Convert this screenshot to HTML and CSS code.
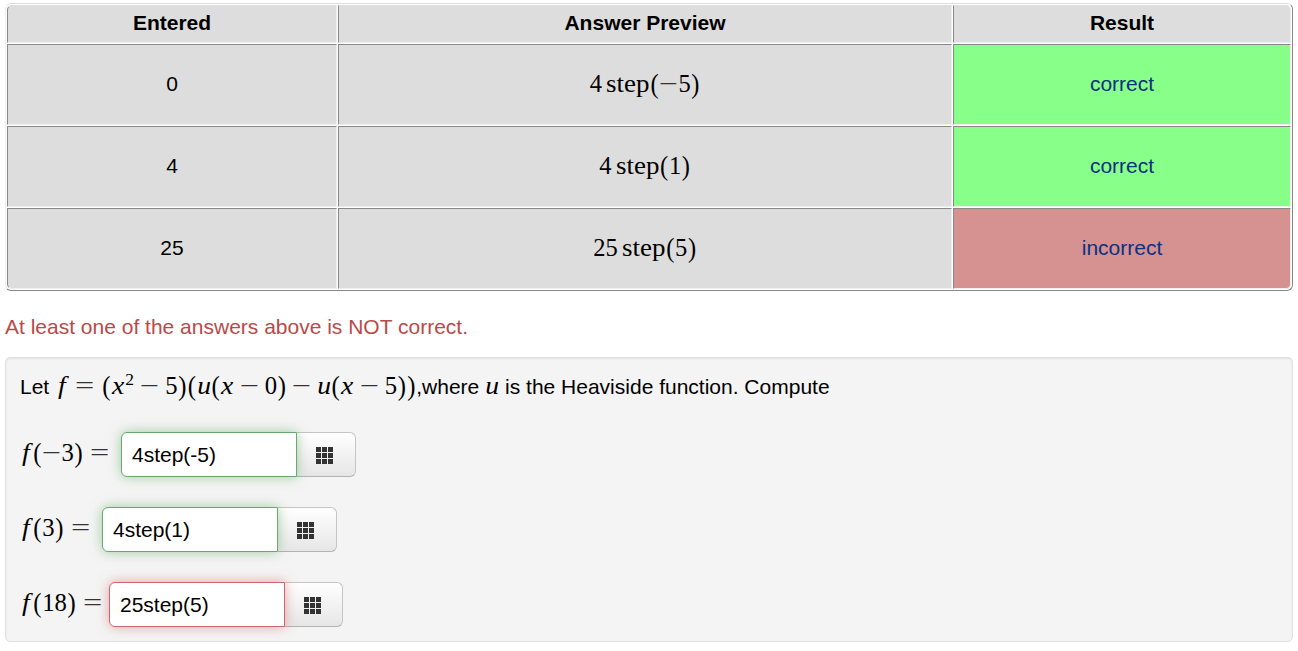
FILE: index.html
```html
<!DOCTYPE html>
<html lang="en">
<head>
<meta charset="utf-8">
<title>Heaviside function</title>
<link rel="stylesheet" href="styles.css">
</head>
<body>
<svg class="defs" width="0" height="0"><symbol id="grid" viewBox="0 0 17 17"><path fill="#333" d="M0 0h5v5H0zM6 0h5v5H6zM12 0h5v5h-5zM0 6h5v5H0zM6 6h5v5H6zM12 6h5v5h-5zM0 12h5v5H0zM6 12h5v5H6zM12 12h5v5h-5z"/></symbol></svg>
<table class="results">
<colgroup><col class="c1"><col class="c2"><col class="c3"></colgroup>
<tr><th>Entered</th><th>Answer Preview</th><th>Result</th></tr>
<tr><td>0</td><td><span class="math">4<span class="step">step</span><b>(</b><i class="minus">−</i>5<b>)</b></span></td><td class="good">correct</td></tr>
<tr><td>4</td><td><span class="math">4<span class="step">step</span><b>(</b>1<b>)</b></span></td><td class="good">correct</td></tr>
<tr><td>25</td><td><span class="math">25<span class="step">step</span><b>(</b>5<b>)</b></span></td><td class="bad">incorrect</td></tr>
</table>
<p class="message">At least one of the answers above is NOT correct.</p>
<main class="problem">
<p class="prompt">Let <span class="math"><em class="f">f</em><i class="rel">=</i><b>(</b><em>x</em><sup>2</sup><i class="bin">−</i>5<b>)</b><b>(</b><em>u</em><b>(</b><em>x</em><i class="bin">−</i>0<b>)</b><i class="bin">−</i><em>u</em><b>(</b><em>x</em><i class="bin">−</i>5<b>)</b><b>)</b></span>,where <span class="math"><em>u</em></span> is the Heaviside function. Compute</p>
<div class="row"><span class="math label l1"><em class="f">f</em><b>(</b><i class="minus">−</i>3<b>)</b><i class="rel">=</i></span><input class="ok" value="4step(-5)"><button><svg width="17" height="17"><use href="#grid"/></svg></button></div>
<div class="row"><span class="math label l2"><em class="f">f</em><b>(</b>3<b>)</b><i class="rel">=</i></span><input class="ok" value="4step(1)"><button><svg width="17" height="17"><use href="#grid"/></svg></button></div>
<div class="row"><span class="math label l3"><em class="f">f</em><b>(</b>18<b>)</b><i class="rel">=</i></span><input class="error" value="25step(5)"><button><svg width="17" height="17"><use href="#grid"/></svg></button></div>
</main>
</body>
</html>
```
FILE: styles.css
```css
* { box-sizing: border-box; }
body { margin: 0; padding: 3px 5px 0; background: #fff; color: #000; font: 21px/30px "Liberation Sans", Arial, sans-serif; overflow: hidden; }
.defs { display: block; height: 0; }
.results { width: 1288px; height: 288px; table-layout: fixed; border-collapse: separate; border-spacing: 1px; border: 1px solid #888; border-top-color: #ddd; border-left-color: #eee; border-radius: 6px; }
.c1 { width: 330px; }
.c2 { width: 614px; }
.c3 { width: 338px; }
th, td { padding: 0; text-align: center; vertical-align: middle; background: #ddd; border: 1px solid #eee; border-top-color: #888; border-left-color: #888; }
th { height: 38px; padding-bottom: 2px; border-top-color: #ddd; }
td { height: 81px; padding-bottom: 1px; }
th:first-child { border-top-left-radius: 5px; }
th:last-child { border-top-right-radius: 5px; }
tr:last-child td:first-child { border-bottom-left-radius: 5px; }
tr:last-child td:last-child { border-bottom-right-radius: 5px; }
.good, .bad { color: #0a3181; }
.good { background: #8f8; }
.bad { background: #d69191; }
.message { margin: 21px 0 15px; color: #b94a48; }

.math { font-family: "Liberation Serif", serif; font-size: 24.5px; line-height: 30px; white-space: nowrap; }
.math b, .math em, .math i { display: inline-block; text-align: center; }
.math b { width: .389em; font-weight: 400; transform: scaleY(1.12); }
.math em { width: .572em; transform: scaleX(1.12); }
.math .f { width: .55em; }
.math i { font-style: normal; width: .778em; transform: scaleX(1.38); color: #333; }
.math .rel { margin: 0 .278em; }
.math .bin { margin: 0 .222em; }
.math sup { font-size: .707em; line-height: 0; vertical-align: .5em; margin-right: 1px; }
.step { display: inline-block; width: 1.783em; text-align: left; transform: scaleX(1.1); transform-origin: left; margin-left: .167em; }

.problem { height: 285px; padding: 14px; background: #f4f4f4; border: 1px solid #e0e0e0; border-radius: 5px; box-shadow: inset 0 1px 2px rgba(0,0,0,.08); }
.problem .math { font-size: 24.7px; }
.prompt { margin: -1px 0 31px; height: 30px; white-space: nowrap; }
.row { display: flex; height: 45px; margin-bottom: 30px; }
.label { padding-top: 6px; margin-left: -1px; }
.l1 { width: 102px; }
.l2 { width: 83px; }
.l3 { width: 90px; }
input { width: 176px; height: 45px; padding: 1px 10px 0; font: 21px "Liberation Sans", Arial, sans-serif; color: #000; background: #fff; border: 1px solid; border-radius: 6px 0 0 6px; outline: 0; position: relative; }
.ok { border-color: #68a970; box-shadow: 0 0 12px rgba(81,163,81,.5); }
.error { border-color: #cc686c; box-shadow: 0 0 12px rgba(218,80,80,.5); }
button { width: 59px; height: 45px; padding: 2px 0 0 19px; background: linear-gradient(#fff, #e6e6e6); border: 1px solid #c5c5c5; border-bottom-color: #b3b3b3; border-left: 0; border-radius: 0 6px 6px 0; text-align: left; }
.row:last-child button { width: 58px; }
button svg { display: block; }
```
